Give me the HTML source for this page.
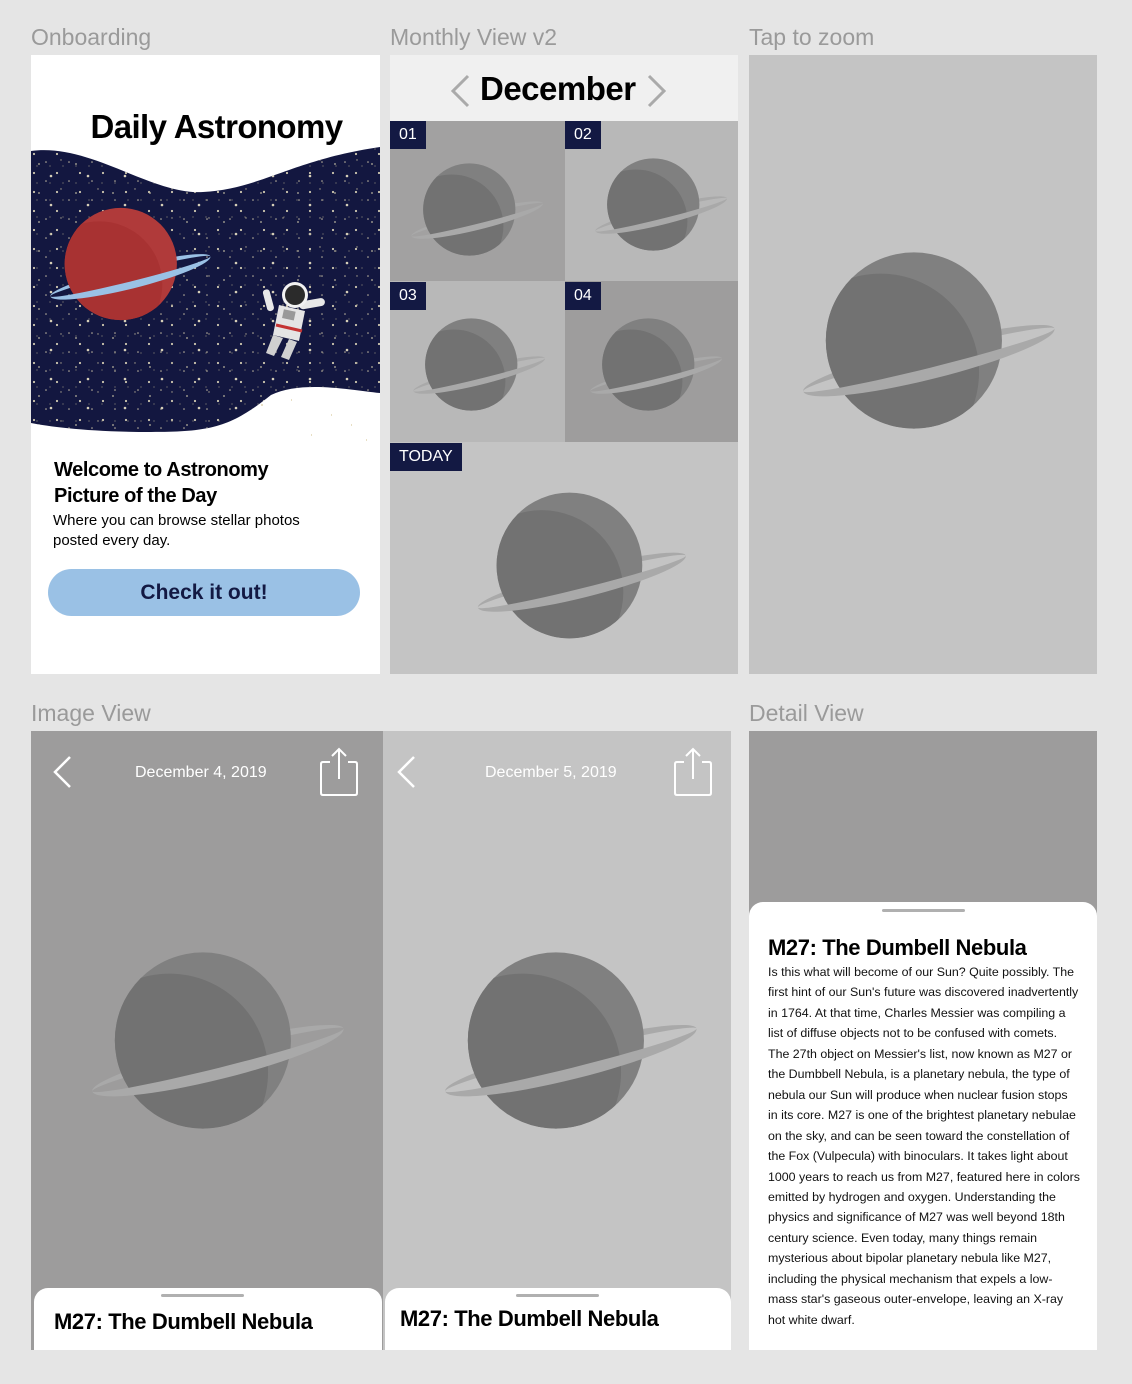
<!DOCTYPE html>
<html><head><meta charset="utf-8"><style>
*{margin:0;padding:0;box-sizing:border-box}
body{width:1132px;height:1384px;background:#e5e5e5;font-family:"Liberation Sans",sans-serif;position:relative;overflow:hidden}
.a{position:absolute}
.lbl{position:absolute;color:#9a9a9a;font-size:23px}
.num{position:absolute;background:#131943;color:#fff;font-size:16px;height:28px;line-height:28px;padding:0 9px}
.pl{position:absolute}
.sheet{position:absolute;background:#fff;border-radius:14px 14px 0 0}
.handle{position:absolute;height:3px;background:#b0b0b0;border-radius:2px}
</style></head><body>
<svg width="0" height="0" style="position:absolute">
<defs>
<clipPath id="pc"><circle cx="0" cy="0" r="100"/></clipPath>
<symbol id="p" viewBox="-135 -105 310 210">
<g transform="translate(17,22) rotate(-14)"><path d="M-147,0 A147,18 0 0 1 147,0 A147,9 0 0 0 -147,0Z" fill="#a9a9a9"/></g>
<circle r="100" fill="#808080"/>
<circle cx="-38" cy="36" r="112" fill="#727272" clip-path="url(#pc)"/>
<g transform="translate(17,22) rotate(-14)"><path d="M-147,0 A147,22 0 0 0 147,0 A147,9 0 0 1 -147,0Z" fill="#a9a9a9"/></g>
</symbol>
<symbol id="r" viewBox="-135 -105 310 210">
<g transform="translate(17,22) rotate(-14)"><path d="M-147,0 A147,18 0 0 1 147,0 A147,9 0 0 0 -147,0Z" fill="#9ac1e5"/></g>
<circle r="100" fill="#b03a3a"/>
<circle cx="-38" cy="36" r="112" fill="#a83232" clip-path="url(#pc)"/>
<g transform="translate(17,22) rotate(-14)"><path d="M-147,0 A147,22 0 0 0 147,0 A147,9 0 0 1 -147,0Z" fill="#9ac1e5"/></g>
</symbol>
<pattern id="s1" width="23" height="19" patternUnits="userSpaceOnUse"><circle cx="3" cy="4" r="1.1" fill="#cfc7b0"/><circle cx="15" cy="12" r="0.8" fill="#bdb59f"/></pattern>
<pattern id="s2" width="37" height="29" patternUnits="userSpaceOnUse"><circle cx="20" cy="5" r="1.3" fill="#d6cfb8"/><circle cx="8" cy="22" r="0.9" fill="#b8b29c"/><circle cx="30" cy="18" r="0.7" fill="#a9a28e"/></pattern>
<pattern id="s3" width="13" height="17" patternUnits="userSpaceOnUse"><circle cx="6" cy="9" r="0.6" fill="#8f8a7a"/></pattern>
</defs></svg>

<div class="lbl" style="left:31px;top:24px">Onboarding</div>
<div class="lbl" style="left:390px;top:24px">Monthly View v2</div>
<div class="lbl" style="left:749px;top:24px">Tap to zoom</div>
<div class="lbl" style="left:31px;top:700px">Image View</div>
<div class="lbl" style="left:749px;top:700px">Detail View</div>

<!-- Onboarding -->
<div class="a" style="left:31px;top:55px;width:349px;height:619px;background:#fff;overflow:hidden">
<svg class="a" style="left:0;top:0" width="349" height="400" viewBox="0 0 349 400">
<path d="M0,96 C60,88 120,140 172,137 C230,134 260,105 349,92 L349,338 C320,335 270,325 240,340 C200,372 180,377 120,377 C60,377 20,372 0,368 Z" fill="#131740"/>
<path d="M0,96 C60,88 120,140 172,137 C230,134 260,105 349,92 L349,338 C320,335 270,325 240,340 C200,372 180,377 120,377 C60,377 20,372 0,368 Z" fill="url(#s1)"/>
<path d="M0,96 C60,88 120,140 172,137 C230,134 260,105 349,92 L349,338 C320,335 270,325 240,340 C200,372 180,377 120,377 C60,377 20,372 0,368 Z" fill="url(#s2)"/>
<path d="M0,96 C60,88 120,140 172,137 C230,134 260,105 349,92 L349,338 C320,335 270,325 240,340 C200,372 180,377 120,377 C60,377 20,372 0,368 Z" fill="url(#s3)"/>
<!-- astronaut -->
<g transform="translate(262,250)">
<rect x="-26" y="-22" width="7" height="22" rx="3" fill="#e8e8e8" transform="rotate(-15)"/>
<rect x="6" y="-2" width="26" height="8" rx="4" fill="#e8e8e8" transform="rotate(-10)"/>
<circle cx="2" cy="-10" r="13" fill="#f2f2f2"/><circle cx="2" cy="-10" r="10" fill="#2b2b2b"/>
<path d="M-14,0 L12,6 L6,36 L-20,30Z" fill="#e4e4e4"/>
<rect x="-8" y="6" width="12" height="9" fill="#999" transform="rotate(12)"/>
<path d="M-17,20 L9,26" stroke="#c43333" stroke-width="3"/>
<path d="M-20,30 L-27,48 L-19,51 L-10,33Z M-4,34 L-12,52 L-4,55 L4,37Z" fill="#d0d0d0"/>
</g>
<path d="M230,350 l2,0 M260,345 l1,0 M300,360 l1,0 M320,370 l1,0 M280,380 l1,0 M335,385 l1,0" stroke="#e8dfc4" stroke-width="2"/>
</svg>
<svg class="pl" style="left:14px;top:150px" width="174" height="118"><use href="#r"/></svg>
<div class="a" style="left:0;width:371px;top:53px;text-align:center;font-size:33px;font-weight:bold;color:#000;letter-spacing:-0.6px">Daily Astronomy</div>
<div class="a" style="left:23px;top:402px;font-size:20px;font-weight:bold;line-height:26px;color:#000;letter-spacing:-0.4px">Welcome to Astronomy<br>Picture of the Day</div>
<div class="a" style="left:22px;top:456px;font-size:15px;line-height:20px;color:#000">Where you can browse stellar photos<br>posted every day.</div>
<div class="a" style="left:17px;top:514px;width:312px;height:47px;border-radius:24px;background:#9ac1e5;color:#131943;font-weight:bold;font-size:21px;text-align:center;line-height:47px">Check it out!</div>
</div>

<!-- Monthly -->
<div class="a" style="left:390px;top:55px;width:348px;height:66px;background:#f0f0f0"></div>
<svg class="a" style="left:449px;top:74px" width="22" height="34"><path d="M19,2 L4,17 L19,32" stroke="#aaa" stroke-width="3" fill="none"/></svg>
<svg class="a" style="left:646px;top:74px" width="22" height="34"><path d="M3,2 L18,17 L3,32" stroke="#aaa" stroke-width="3" fill="none"/></svg>
<div class="a" style="left:480px;top:70px;font-size:33px;font-weight:bold;color:#000;letter-spacing:-0.5px">December</div>
<div class="a" style="left:390px;top:121px;width:175px;height:160px;background:#a2a1a1"></div>
<div class="a" style="left:565px;top:121px;width:173px;height:160px;background:#b8b8b8"></div>
<div class="a" style="left:390px;top:281px;width:175px;height:161px;background:#b8b8b8"></div>
<div class="a" style="left:565px;top:281px;width:173px;height:161px;background:#9e9d9d"></div>
<div class="a" style="left:390px;top:442px;width:348px;height:232px;background:#c4c4c4"></div>
<svg class="pl" style="left:407px;top:161px" width="143" height="97"><use href="#p"/></svg>
<svg class="pl" style="left:591px;top:156px" width="143" height="97"><use href="#p"/></svg>
<svg class="pl" style="left:409px;top:316px" width="143" height="97"><use href="#p"/></svg>
<svg class="pl" style="left:586px;top:316px" width="143" height="97"><use href="#p"/></svg>
<svg class="pl" style="left:471px;top:489px" width="226" height="153"><use href="#p"/></svg>
<div class="num" style="left:390px;top:121px">01</div>
<div class="num" style="left:565px;top:121px">02</div>
<div class="num" style="left:390px;top:282px">03</div>
<div class="num" style="left:565px;top:282px">04</div>
<div class="num" style="left:390px;top:443px">TODAY</div>

<!-- Tap to zoom -->
<div class="a" style="left:749px;top:55px;width:348px;height:619px;background:#c4c4c4"></div>
<svg class="pl" style="left:795px;top:248px" width="273" height="185"><use href="#p"/></svg>

<!-- Image view -->
<div class="a" style="left:31px;top:731px;width:352px;height:619px;background:#9d9c9c"></div>
<div class="a" style="left:383px;top:731px;width:348px;height:619px;background:#c4c4c4"></div>
<svg class="pl" style="left:84px;top:948px" width="273" height="185"><use href="#p"/></svg>
<svg class="pl" style="left:437px;top:948px" width="273" height="185"><use href="#p"/></svg>
<svg class="a" style="left:50px;top:754px" width="24" height="36"><path d="M20,3 L5,18 L20,33" stroke="#fff" stroke-width="2.5" fill="none"/></svg>
<svg class="a" style="left:394px;top:754px" width="24" height="36"><path d="M20,3 L5,18 L20,33" stroke="#fff" stroke-width="2.5" fill="none"/></svg>
<div class="a" style="left:135px;top:764px;color:#fff;font-size:16px">December 4, 2019</div>
<div class="a" style="left:485px;top:764px;color:#fff;font-size:16px">December 5, 2019</div>
<svg class="a" style="left:318px;top:746px" width="44" height="52"><path d="M12,16 H5 Q3,16 3,18 V47 Q3,49 5,49 H37 Q39,49 39,47 V18 Q39,16 37,16 H30 M21,33 V3 M14,10 L21,3 L28,10" stroke="#fff" stroke-width="2" fill="none"/></svg>
<svg class="a" style="left:672px;top:746px" width="44" height="52"><path d="M12,16 H5 Q3,16 3,18 V47 Q3,49 5,49 H37 Q39,49 39,47 V18 Q39,16 37,16 H30 M21,33 V3 M14,10 L21,3 L28,10" stroke="#fff" stroke-width="2" fill="none"/></svg>
<div class="sheet" style="left:34px;top:1288px;width:348px;height:62px"></div>
<div class="sheet" style="left:385px;top:1288px;width:346px;height:62px"></div>
<div class="handle" style="left:161px;top:1294px;width:83px"></div>
<div class="handle" style="left:516px;top:1294px;width:83px"></div>
<div class="a" style="left:54px;top:1309px;font-size:22px;font-weight:bold;color:#000;letter-spacing:-0.4px">M27: The Dumbell Nebula</div>
<div class="a" style="left:400px;top:1306px;font-size:22px;font-weight:bold;color:#000;letter-spacing:-0.4px">M27: The Dumbell Nebula</div>

<!-- Detail view -->
<div class="a" style="left:749px;top:731px;width:348px;height:619px;background:#9d9c9c"></div>
<div class="sheet" style="left:749px;top:902px;width:348px;height:448px"></div>
<div class="handle" style="left:882px;top:909px;width:83px"></div>
<div class="a" style="left:768px;top:935px;font-size:22px;font-weight:bold;color:#000;letter-spacing:-0.4px">M27: The Dumbell Nebula</div>
<div class="a" style="left:768px;top:962px;width:312px;font-size:12.4px;line-height:20.45px;color:#111">Is this what will become of our Sun? Quite possibly. The first hint of our Sun's future was discovered inadvertently in 1764. At that time, Charles Messier was compiling a list of diffuse objects not to be confused with comets. The 27th object on Messier's list, now known as M27 or the Dumbbell Nebula, is a planetary nebula, the type of nebula our Sun will produce when nuclear fusion stops in its core. M27 is one of the brightest planetary nebulae on the sky, and can be seen toward the constellation of the Fox (Vulpecula) with binoculars. It takes light about 1000 years to reach us from M27, featured here in colors emitted by hydrogen and oxygen. Understanding the physics and significance of M27 was well beyond 18th century science. Even today, many things remain mysterious about bipolar planetary nebula like M27, including the physical mechanism that expels a low-mass star's gaseous outer-envelope, leaving an X-ray hot white dwarf.</div>
</body></html>
